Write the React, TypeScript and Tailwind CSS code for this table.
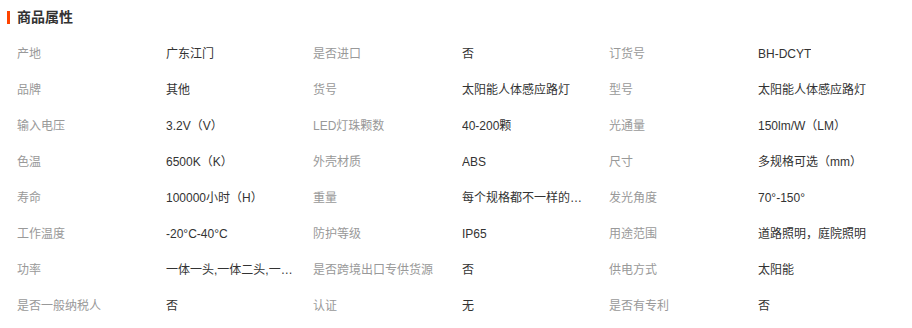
const attrs: [string, string][] = [
  ["产地", "广东江门"],
  ["是否进口", "否"],
  ["订货号", "BH-DCYT"],
  ["品牌", "其他"],
  ["货号", "太阳能人体感应路灯"],
  ["型号", "太阳能人体感应路灯"],
  ["输入电压", "3.2V（V）"],
  ["LED灯珠颗数", "40-200颗"],
  ["光通量", "150lm/W（LM）"],
  ["色温", "6500K（K）"],
  ["外壳材质", "ABS"],
  ["尺寸", "多规格可选（mm）"],
  ["寿命", "100000小时（H）"],
  ["重量", "每个规格都不一样的重量"],
  ["发光角度", "70°-150°"],
  ["工作温度", "-20°C-40°C"],
  ["防护等级", "IP65"],
  ["用途范围", "道路照明，庭院照明"],
  ["功率", "一体一头,一体二头,一体三头"],
  ["是否跨境出口专供货源", "否"],
  ["供电方式", "太阳能"],
  ["是否一般纳税人", "否"],
  ["认证", "无"],
  ["是否有专利", "否"],
];

export default function App() {
  return (
    <div
      className="w-[912px] h-[328px] bg-white overflow-hidden pt-[1px]"
      style={{ fontFamily: '"Liberation Sans", "Noto Sans CJK SC", sans-serif' }}
    >
      <div className="flex items-center h-[35px] pl-[7px] pb-[2px]">
        <span className="w-[3px] h-[13px] bg-[#ff4400] mr-[7px]" />
        <h3 className="text-[14px] font-bold text-[#333]">商品属性</h3>
      </div>
      <div className="grid grid-cols-[296px_296px_296px] pl-[17px]">
        {attrs.map(([label, value]) => (
          <div key={label} className="flex items-center h-[36px] text-[12px]">
            <span className="w-[149px] shrink-0 text-[#999] whitespace-nowrap">{label}</span>
            <span className="max-w-[130px] text-[#333] whitespace-nowrap overflow-hidden text-ellipsis">
              {value}
            </span>
          </div>
        ))}
      </div>
    </div>
  );
}
